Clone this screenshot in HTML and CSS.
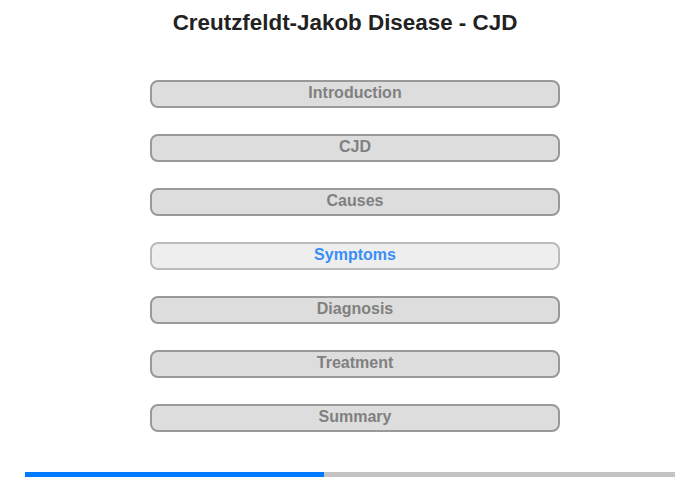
FILE: index.html
```html
<!DOCTYPE html>
<html>
<head>
<meta charset="utf-8">
<link rel="stylesheet" href="styles.css">
</head>
<body>
<div class="page">
  <h1 class="title">Creutzfeldt-Jakob Disease - CJD</h1>
  <nav class="menu">
    <div class="item">Introduction</div>
    <div class="item">CJD</div>
    <div class="item">Causes</div>
    <div class="item active">Symptoms</div>
    <div class="item">Diagnosis</div>
    <div class="item">Treatment</div>
    <div class="item">Summary</div>
  </nav>
  <div class="progress"><div class="fill" style="width:46%"></div></div>
</div>
</body>
</html>
```
FILE: styles.css
```css
html, body {
  margin: 0;
  padding: 0;
  background: #fff;
  font-family: "Liberation Sans", Arial, sans-serif;
}
.page {
  width: 700px;
  height: 480px;
  display: flex;
  flex-direction: column;
}
.title {
  margin: 10px 0 0 0;
  padding-right: 10px;
  text-align: center;
  font-size: 22.4px;
  font-weight: bold;
  line-height: 25px;
  color: #222;
}
.menu {
  margin-top: 45px;
  padding-left: 150px;
  display: flex;
  flex-direction: column;
  gap: 26px;
}
.item {
  box-sizing: border-box;
  width: 410px;
  height: 28px;
  border: 2px solid #999;
  border-radius: 8px;
  background: #ddd;
  color: #808080;
  font-size: 16px;
  font-weight: bold;
  text-align: center;
  line-height: 22px;
}
.item.active {
  background: #eee;
  border-color: #bbb;
  color: #3a8ef5;
}
.progress {
  margin: 40px 0 0 25px;
  width: 650px;
  height: 5px;
  background: #c4c4c4;
}
.fill {
  height: 100%;
  background: #007bff;
}
```
